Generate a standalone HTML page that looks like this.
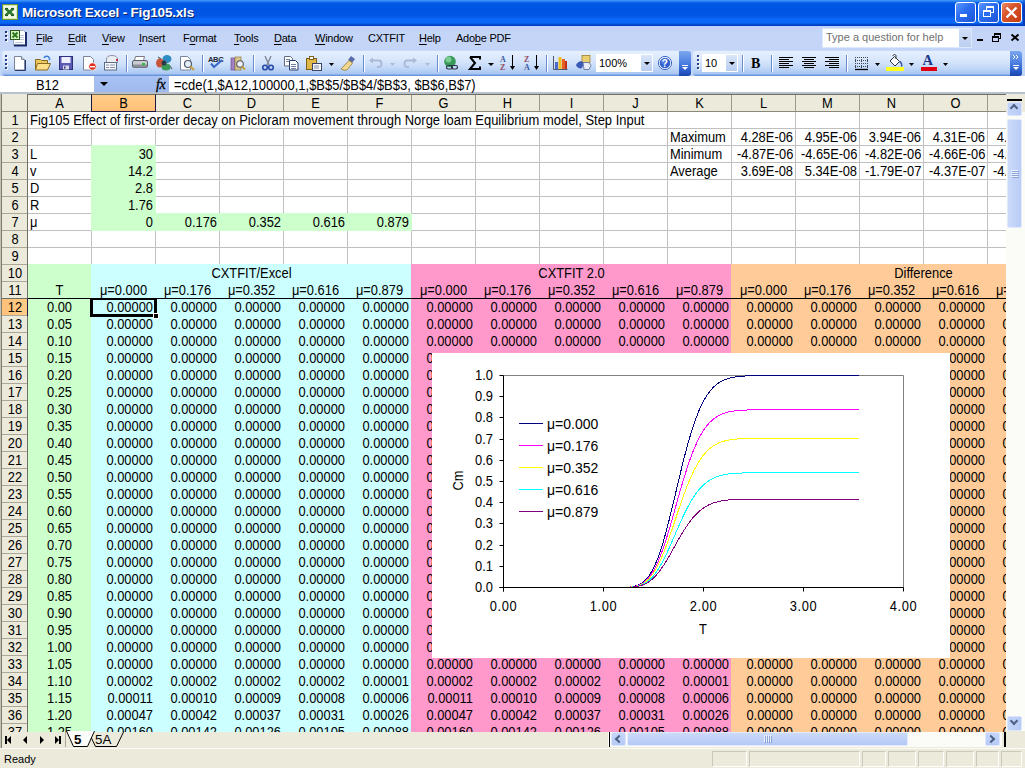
<!DOCTYPE html><html><head><meta charset="utf-8"><title>Microsoft Excel - Fig105.xls</title><style>
*{margin:0;padding:0;box-sizing:border-box}
html,body{width:1025px;height:768px;overflow:hidden;background:#fff;font-family:"Liberation Sans",sans-serif;}
.a{position:absolute}
.t{position:absolute;white-space:nowrap;font-size:13.33px;line-height:17px;height:17px;color:#000;letter-spacing:-0.3px}
.r{text-align:right}
.c{text-align:center}
.g{font-size:14px;letter-spacing:0;transform:scaleX(.92);transform-origin:0 50%}
.g.r{transform-origin:100% 50%}
.g.c{transform-origin:50% 50%}
u{text-decoration:underline;text-underline-offset:1.5px;text-decoration-thickness:1px}
</style></head><body>
<div class="a" style="left:0;top:0;width:1025px;height:26px;background:linear-gradient(#3d9cff 0px,#2a7cf0 1.5px,#0058e6 3px,#0054e3 10px,#0256e6 16px,#0a68f8 19px,#0866f6 23px,#0048d0 24.5px,#003cb8 26px)"></div>
<svg class="a" style="left:0;top:0" width="22" height="24"><rect x="2.5" y="4.5" width="15" height="15" fill="#f4f9e6" stroke="#6a9a38"/><rect x="3.5" y="5.5" width="13" height="13" fill="none" stroke="#d8e8b0" stroke-width="0.8"/><path d="M5.5 8.5l8 7M13.5 8.5l-8 7" stroke="#2f7a30" stroke-width="2.6"/><path d="M5 8.5h3M11 8.5h3M5 15.5h3M11 15.5h3" stroke="#1f5a20" stroke-width="1.2"/></svg>
<div class="a" style="left:22px;top:4px;font:bold 13.5px/18px 'Liberation Sans',sans-serif;color:#fff;text-shadow:1px 1px 0 #0a246a;letter-spacing:-0.18px">Microsoft Excel - Fig105.xls</div>
<div class="a" style="left:1023px;top:0;width:2px;height:26px;background:linear-gradient(#2a70e8,#0a3cc0 20%,#0838b0)"></div>
<div class="a" style="left:955px;top:2px;width:21px;height:21px;border:1px solid #fff;border-radius:3px;background:linear-gradient(135deg,#5c96ff 0%,#2a6cf0 45%,#1d55d8 100%)"></div>
<div class="a" style="left:978px;top:2px;width:21px;height:21px;border:1px solid #fff;border-radius:3px;background:linear-gradient(135deg,#5c96ff 0%,#2a6cf0 45%,#1d55d8 100%)"></div>
<div class="a" style="left:1001px;top:2px;width:21px;height:21px;border:1px solid #fff;border-radius:3px;background:linear-gradient(135deg,#e78a6a 0%,#d9532b 40%,#c43b12 100%)"></div>
<div class="a" style="left:960px;top:14px;width:7px;height:3px;background:#fff"></div>
<div class="a" style="left:986px;top:6px;width:8px;height:7px;border:1px solid #fff;border-top-width:2px"></div>
<div class="a" style="left:983px;top:10px;width:8px;height:7px;border:1px solid #fff;border-top-width:2px;background:#2a6cf0"></div>
<svg class="a" style="left:1000px;top:0" width="25" height="26"><path d="M6.5 7.5l10 10M16.5 7.5l-10 10" stroke="#fff" stroke-width="2.4"/></svg>
<div class="a" style="left:0;top:26px;width:1025px;height:24px;background:linear-gradient(#b6d8fc 0px,#c9cdfc 2.5px,#c6d3f8 4px,#bcd8f4 5.5px,#c4d5f8 7px,#c4d5f8 100%)"></div>
<div class="a" style="left:0;top:50px;width:1025px;height:26px;background:linear-gradient(#c9dbf9,#c0d4f6)"></div>
<div class="a" style="left:5px;top:31px;width:2px;height:2px;background:#1c3478;box-shadow:1px 1px 0 #fff"></div>
<div class="a" style="left:5px;top:35px;width:2px;height:2px;background:#1c3478;box-shadow:1px 1px 0 #fff"></div>
<div class="a" style="left:5px;top:39px;width:2px;height:2px;background:#1c3478;box-shadow:1px 1px 0 #fff"></div>
<svg class="a" style="left:0;top:26px" width="32" height="24"><path d="M13.5 4.5h10l2 2v12.5h-12z" fill="#fff" stroke="#9aa8c8"/><path d="M14 19.5h12V6" stroke="#1c2c68" stroke-width="2" fill="none"/><path d="M20 9.5h4M20 11.5h4M20 13.5h4M15 16.5h8" stroke="#b8c4dc"/><rect x="10.5" y="4.5" width="9" height="9" fill="#d8f4b8" stroke="#2a5a28"/><path d="M12.5 6.5l5 5M17.5 6.5l-5 5" stroke="#2a7a2a" stroke-width="2"/></svg>
<div class="a" style="left:36px;top:30px;font:11px/16px 'Liberation Sans',sans-serif;color:#000;letter-spacing:-0.25px"><u>F</u>ile</div>
<div class="a" style="left:68px;top:30px;font:11px/16px 'Liberation Sans',sans-serif;color:#000;letter-spacing:-0.25px"><u>E</u>dit</div>
<div class="a" style="left:102px;top:30px;font:11px/16px 'Liberation Sans',sans-serif;color:#000;letter-spacing:-0.25px"><u>V</u>iew</div>
<div class="a" style="left:139px;top:30px;font:11px/16px 'Liberation Sans',sans-serif;color:#000;letter-spacing:-0.25px"><u>I</u>nsert</div>
<div class="a" style="left:183px;top:30px;font:11px/16px 'Liberation Sans',sans-serif;color:#000;letter-spacing:-0.25px">F<u>o</u>rmat</div>
<div class="a" style="left:234px;top:30px;font:11px/16px 'Liberation Sans',sans-serif;color:#000;letter-spacing:-0.25px"><u>T</u>ools</div>
<div class="a" style="left:274px;top:30px;font:11px/16px 'Liberation Sans',sans-serif;color:#000;letter-spacing:-0.25px"><u>D</u>ata</div>
<div class="a" style="left:315px;top:30px;font:11px/16px 'Liberation Sans',sans-serif;color:#000;letter-spacing:-0.25px"><u>W</u>indow</div>
<div class="a" style="left:368px;top:30px;font:11px/16px 'Liberation Sans',sans-serif;color:#000;letter-spacing:-0.25px">CXTFIT</div>
<div class="a" style="left:419px;top:30px;font:11px/16px 'Liberation Sans',sans-serif;color:#000;letter-spacing:-0.25px"><u>H</u>elp</div>
<div class="a" style="left:456px;top:30px;font:11px/16px 'Liberation Sans',sans-serif;color:#000;letter-spacing:-0.25px">Ado<u>b</u>e PDF</div>
<div class="a" style="left:822px;top:28px;width:150px;height:20px;background:#fff;border:1px solid #dce8fb"></div>
<div class="a" style="left:826px;top:29px;font:11px/17px 'Liberation Sans',sans-serif;color:#707070;letter-spacing:0px">Type a question for help</div>
<div class="a" style="left:959px;top:29px;width:12px;height:18px;background:linear-gradient(#d0def6,#bccff0)"></div>
<div class="a" style="left:962px;top:37px;width:0;height:0;border-left:3px solid transparent;border-right:3px solid transparent;border-top:3px solid #000"></div>
<div class="a" style="left:977px;top:39px;width:6px;height:2px;background:#000"></div>
<div class="a" style="left:994px;top:33px;width:7px;height:6px;border:1px solid #000;border-top-width:2px"></div>
<div class="a" style="left:992px;top:36px;width:7px;height:6px;border:1px solid #000;border-top-width:2px;background:#c4d5f8"></div>
<svg class="a" style="left:1005px;top:28px" width="20" height="20"><path d="M6.5 6.5l7 6M13.5 6.5l-7 6" stroke="#000" stroke-width="1.9"/></svg>
<div class="a" style="left:2px;top:51px;width:688px;height:25px;border-radius:3px;background:linear-gradient(#e6f0fe 0%,#d9e7fc 35%,#c5daf8 65%,#aac7f2 90%,#7ba3e3 96%,#5a85d0 100%)"></div>
<div class="a" style="left:693px;top:51px;width:329px;height:25px;border-radius:3px;background:linear-gradient(#e6f0fe 0%,#d9e7fc 35%,#c5daf8 65%,#aac7f2 90%,#7ba3e3 96%,#5a85d0 100%)"></div>
<div class="a" style="left:679px;top:51px;width:12px;height:25px;border-radius:0 3px 3px 0;background:linear-gradient(#7ba7ee,#4a7de0 50%,#2556c4 85%,#1b46a8)"></div>
<div class="a" style="left:682px;top:65px;width:6px;height:1px;background:#fff"></div>
<div class="a" style="left:682px;top:67px;width:0;height:0;border-left:3px solid transparent;border-right:3px solid transparent;border-top:3px solid #fff"></div>
<div class="a" style="left:1010px;top:51px;width:12px;height:25px;border-radius:0 3px 3px 0;background:linear-gradient(#7ba7ee,#4a7de0 50%,#2556c4 85%,#1b46a8)"></div>
<div class="a" style="left:1013px;top:65px;width:6px;height:1px;background:#fff"></div>
<div class="a" style="left:1013px;top:67px;width:0;height:0;border-left:3px solid transparent;border-right:3px solid transparent;border-top:3px solid #fff"></div>
<svg class="a" style="left:1010px;top:51px" width="12" height="12"><path d="M3 4l2 2-2 2M6 4l2 2-2 2" stroke="#fff" stroke-width="1" fill="none"/></svg>
<div class="a" style="left:5px;top:55px;width:2px;height:2px;background:#27418f;box-shadow:1px 1px 0 #fff"></div>
<div class="a" style="left:5px;top:59px;width:2px;height:2px;background:#27418f;box-shadow:1px 1px 0 #fff"></div>
<div class="a" style="left:5px;top:63px;width:2px;height:2px;background:#27418f;box-shadow:1px 1px 0 #fff"></div>
<div class="a" style="left:5px;top:67px;width:2px;height:2px;background:#27418f;box-shadow:1px 1px 0 #fff"></div>
<div class="a" style="left:697px;top:55px;width:2px;height:2px;background:#27418f;box-shadow:1px 1px 0 #fff"></div>
<div class="a" style="left:697px;top:59px;width:2px;height:2px;background:#27418f;box-shadow:1px 1px 0 #fff"></div>
<div class="a" style="left:697px;top:63px;width:2px;height:2px;background:#27418f;box-shadow:1px 1px 0 #fff"></div>
<div class="a" style="left:697px;top:67px;width:2px;height:2px;background:#27418f;box-shadow:1px 1px 0 #fff"></div>
<div class="a" style="left:126px;top:55px;width:1px;height:17px;background:#6a8ccb;box-shadow:1px 0 0 #fff"></div>
<div class="a" style="left:202px;top:55px;width:1px;height:17px;background:#6a8ccb;box-shadow:1px 0 0 #fff"></div>
<div class="a" style="left:253px;top:55px;width:1px;height:17px;background:#6a8ccb;box-shadow:1px 0 0 #fff"></div>
<div class="a" style="left:363px;top:55px;width:1px;height:17px;background:#6a8ccb;box-shadow:1px 0 0 #fff"></div>
<div class="a" style="left:437px;top:55px;width:1px;height:17px;background:#6a8ccb;box-shadow:1px 0 0 #fff"></div>
<div class="a" style="left:546px;top:55px;width:1px;height:17px;background:#6a8ccb;box-shadow:1px 0 0 #fff"></div>
<div class="a" style="left:742px;top:55px;width:1px;height:17px;background:#6a8ccb;box-shadow:1px 0 0 #fff"></div>
<div class="a" style="left:771px;top:55px;width:1px;height:17px;background:#6a8ccb;box-shadow:1px 0 0 #fff"></div>
<div class="a" style="left:846px;top:55px;width:1px;height:17px;background:#6a8ccb;box-shadow:1px 0 0 #fff"></div>
<svg class="a" style="left:0;top:0" width="1025" height="80"><path d="M14.5 56.5h7l3 3v10.5h-10z" fill="#fff" stroke="#7a8599"/><path d="M15 70.5h10.5V60" stroke="#2a3a70" fill="none"/><path d="M21.5 56.5v3h3" fill="#dde" stroke="#7a8599"/><path d="M35.5 59.5h5l1 1h6v9h-12z" fill="#e9c860" stroke="#8a6a20"/><path d="M37.5 63.5h13l-3 6.5h-12z" fill="#ffe08a" stroke="#8a6a20"/><path d="M44 58c1-2 4-2.5 5.5 0" stroke="#3c7bd8" stroke-width="1.6" fill="none"/><path d="M48 58.5h3l-1.5 2z" fill="#3c7bd8"/><rect x="59.5" y="56.5" width="13" height="13" fill="#5a5ab4" stroke="#30307a"/><rect x="61.5" y="57" width="9" height="6" fill="#eef0ff"/><rect x="63" y="65.5" width="6" height="4" fill="#d8d8e8"/><rect x="64" y="66.5" width="1.5" height="2" fill="#30307a"/><path d="M83.5 56.5h7l3 3v10.5h-10z" fill="#fff" stroke="#7a8599"/><circle cx="92.5" cy="66.5" r="3.8" fill="#e0301c" stroke="#fff" stroke-width="0.8"/><rect x="90" y="66" width="5" height="1.4" fill="#fff"/><path d="M106.5 63v-4c0-2 2-3.5 5.5-3.5s5.5 1.5 5.5 3.5v4" fill="#eceef2" stroke="#8a94a8"/><rect x="104.5" y="62.5" width="12" height="7.5" fill="#f8f8fa" stroke="#5a6a8a"/><path d="M106 65h3M110 65h5M106 67.5h3M110 67.5h5" stroke="#8090b0"/><rect x="116" y="59" width="2" height="2" fill="#c03040"/><path d="M135.5 56.5h9l-1 4h-9z" fill="#fff" stroke="#7a7a80"/><rect x="132.5" y="60.5" width="15" height="7" rx="1.5" fill="#c8ccd0" stroke="#5a6068"/><rect x="133" y="64.5" width="14" height="3" fill="#8a9098"/><rect x="142" y="63" width="3" height="2" fill="#30c040"/><ellipse cx="167" cy="59" rx="4.5" ry="4" fill="#2f8cc0"/><ellipse cx="160" cy="63" rx="4" ry="4.5" fill="#c8563a"/><ellipse cx="166" cy="67" rx="4.5" ry="3.5" fill="#3a9a58"/><circle cx="164" cy="63" r="2.5" fill="#2a3a48"/><path d="M158 57l3 2M170 66l2 3" stroke="#5a6a78" stroke-width="1.2"/><path d="M180.5 56.5h7l3 3v10.5h-10z" fill="#fff" stroke="#7a8599"/><circle cx="188" cy="64" r="3.5" fill="#e6eef8" stroke="#505a68" stroke-width="1.2"/><path d="M190.5 66.5l3.5 3.5" stroke="#c8a040" stroke-width="2"/><text x="208" y="61.5" font-family="Liberation Sans" font-weight="bold" font-size="7.5" fill="#202838" letter-spacing="-0.3">ABC</text><path d="M211 63.5l3 3.5 8-7" stroke="#3a6ac8" stroke-width="2.2" fill="none"/><rect x="231" y="58" width="4" height="12" fill="#a080c8" stroke="#705090" stroke-width="0.7"/><rect x="235" y="57" width="6" height="13" fill="#d8c890" stroke="#907a40" stroke-width="0.7"/><circle cx="240" cy="64" r="3.3" fill="#eef" stroke="#555" stroke-width="1.1"/><path d="M242 66.5l3 3" stroke="#c0a030" stroke-width="2"/><path d="M265 56l4 9M271 56l-4 9" stroke="#7b8290" stroke-width="1.3"/><circle cx="265" cy="67.5" r="2.3" fill="none" stroke="#2a4ca8" stroke-width="1.6"/><circle cx="271" cy="67.5" r="2.3" fill="none" stroke="#2a4ca8" stroke-width="1.6"/><path d="M284.5 56.5h6l2 2v7.5h-8z" fill="#fff" stroke="#606a80"/><path d="M289.5 60.5h6l2.5 2.5v7h-8.5z" fill="#fff" stroke="#2a3a70"/><path d="M286 59.5h4M286 61.5h3M291 64.5h5M291 66.5h5M291 68.5h5" stroke="#7080a0"/><rect x="306.5" y="58.5" width="10" height="11" fill="#e0b848" stroke="#806018"/><rect x="309.5" y="56.5" width="4" height="3" fill="#fff" stroke="#806018"/><rect x="312.5" y="63.5" width="9" height="7" fill="#f6f6f8" stroke="#3a4468"/><path d="M314 66h5M314 68h5" stroke="#8090b0"/><path d="M329 63h5l-2.5 3z" fill="#000"/><path d="M351 56l4 3-3 4-4-3z" fill="#5a6aa8"/><path d="M349 60.5l3.5 2.5-5 6.5c-1.5 1-4 1-6.5-.5z" fill="#f0d890" stroke="#9a7a30" stroke-width="0.8"/><path d="M372 60.5h7c3 0 3.5 6.5 0 6.5h-2" stroke="#aabad6" stroke-width="2" fill="none"/><path d="M369 60.5l4-3v6z" fill="#aabad6"/><path d="M390 63h5l-2.5 3z" fill="#aabad6"/><path d="M414 60.5h-7c-3 0-3.5 6.5 0 6.5h2" stroke="#aabad6" stroke-width="2" fill="none"/><path d="M417 60.5l-4-3v6z" fill="#aabad6"/><path d="M425 63h5l-2.5 3z" fill="#aabad6"/><circle cx="450" cy="61.5" r="5.8" fill="#3a9a5a"/><circle cx="448.5" cy="59.5" r="3" fill="#8ad8a0" opacity="0.8"/><rect x="446.5" y="65.5" width="6" height="3.5" rx="1.7" fill="none" stroke="#2a3448" stroke-width="1.2"/><rect x="451.5" y="65.5" width="6" height="3.5" rx="1.7" fill="none" stroke="#2a3448" stroke-width="1.2"/><path d="M470 57h10v2.5M470 57l5 6-5 6h10v-2.5" stroke="#000" stroke-width="2" fill="none"/><path d="M488 63h6l-3 3z" fill="#000"/><text x="500" y="62" font-family="Liberation Serif" font-weight="bold" font-size="8" fill="#3a5aa0">A</text><text x="500" y="70" font-family="Liberation Serif" font-weight="bold" font-size="8" fill="#904a60">Z</text><path d="M512.5 55v13" stroke="#000"/><path d="M510 66h5l-2.5 4z" fill="#000"/><text x="524" y="62" font-family="Liberation Serif" font-weight="bold" font-size="8" fill="#904a60">Z</text><text x="524" y="70" font-family="Liberation Serif" font-weight="bold" font-size="8" fill="#3a5aa0">A</text><path d="M536.5 55v13" stroke="#000"/><path d="M534 66h5l-2.5 4z" fill="#000"/><path d="M553.5 56v13.5h14" stroke="#505a70" fill="none"/><rect x="555" y="62" width="3" height="7" fill="#4a6ad0"/><rect x="558.5" y="57" width="3" height="12" fill="#f0c020"/><rect x="562" y="59" width="3" height="10" fill="#e86020"/><rect x="565" y="61" width="2" height="8" fill="#c03020"/><rect x="582" y="55.5" width="8" height="7" fill="#e8d070" stroke="#a08030" stroke-width="0.8"/><path d="M576 65c2-4 6-5 8-2l-2 5c-2 1-5 0-6-3z" fill="#3a5ab8"/><path d="M583 62.5h6l2 3-2 4h-5z" fill="#e8eef8" stroke="#5a6a98" stroke-width="0.8"/><circle cx="665" cy="63" r="6.6" fill="#fff" stroke="#3a64c8" stroke-width="1"/><circle cx="665" cy="63" r="5.3" fill="#2f5fd0"/><circle cx="664" cy="61.5" r="3" fill="#5a88e8" opacity="0.7"/><text x="661.8" y="67" font-family="Liberation Sans" font-weight="bold" font-size="10" fill="#fff">?</text><text x="751" y="67.5" font-family="Liberation Serif" font-weight="bold" font-size="14" fill="#000">B</text><path d="M779 57.5h14M779 59.5h10M779 61.5h14M779 63.5h10M779 65.5h14M779 67.5h10" stroke="#000" stroke-width="1.15"/><path d="M802 57.5h14M804 59.5h10M802 61.5h14M804 63.5h10M802 65.5h14M804 67.5h10" stroke="#000" stroke-width="1.15"/><path d="M825 57.5h14M829 59.5h10M825 61.5h14M829 63.5h10M825 65.5h14M829 67.5h10" stroke="#000" stroke-width="1.15"/><path d="M855 57.5h1M857 57.5h1M859 57.5h1M861 57.5h1M863 57.5h1M865 57.5h1M867 57.5h1M855 60.5h1M857 60.5h1M859 60.5h1M861 60.5h1M863 60.5h1M865 60.5h1M867 60.5h1M855 63.5h1M857 63.5h1M859 63.5h1M861 63.5h1M863 63.5h1M865 63.5h1M867 63.5h1M855 66.5h1M857 66.5h1M859 66.5h1M861 66.5h1M863 66.5h1M865 66.5h1M867 66.5h1M855.5 57v1M855.5 59v1M855.5 61v1M855.5 63v1M855.5 65v1M855.5 67v1M861.5 57v1M861.5 59v1M861.5 61v1M861.5 63v1M861.5 65v1M861.5 67v1M867.5 57v1M867.5 59v1M867.5 61v1M867.5 63v1M867.5 65v1M867.5 67v1" stroke="#404858" stroke-width="1"/><path d="M855 69.5h13" stroke="#000" stroke-width="1.3"/><path d="M875 63h5l-2.5 3z" fill="#000"/><path d="M890 61l4.5-4.5 5 5-4.5 4.5z" fill="#fff" stroke="#303840"/><path d="M893 56c0-2 3-2 3 0v3" stroke="#303840" fill="none"/><path d="M899.5 61.5c2 1 2.5 3.5 2 5" stroke="#3050a0" stroke-width="1.5" fill="none"/><rect x="886" y="67" width="18" height="4" rx="1" fill="#ffff20"/><path d="M909 63h5l-2.5 3z" fill="#000"/><text x="922.5" y="65" font-family="Liberation Serif" font-weight="bold" font-size="14.5" fill="#203a88">A</text><rect x="921" y="67" width="16" height="4" fill="#e00010"/><path d="M943 63h5l-2.5 3z" fill="#000"/></svg>
<div class="a" style="left:596px;top:54px;width:57px;height:18px;background:#fff"></div>
<div class="a" style="left:599px;top:55px;font:11px/16px 'Liberation Sans',sans-serif;color:#000">100%</div>
<div class="a" style="left:641px;top:55px;width:11px;height:16px;background:linear-gradient(#dae6f8,#b8cdef)"></div>
<div class="a" style="left:644px;top:62px;border-left:3px solid transparent;border-right:3px solid transparent;border-top:3px solid #000"></div>
<div class="a" style="left:702px;top:54px;width:36px;height:18px;background:#fff"></div>
<div class="a" style="left:705px;top:55px;font:11px/16px 'Liberation Sans',sans-serif;color:#000">10</div>
<div class="a" style="left:726px;top:55px;width:11px;height:16px;background:linear-gradient(#dae6f8,#b8cdef)"></div>
<div class="a" style="left:729px;top:62px;border-left:3px solid transparent;border-right:3px solid transparent;border-top:3px solid #000"></div>
<div class="a" style="left:0;top:76px;width:1025px;height:17px;background:#fff"></div>
<div class="a" style="left:94px;top:76px;width:75px;height:17px;background:linear-gradient(#a9c2f3,#9fb9ee)"></div>
<div class="a" style="left:0;top:92px;width:1025px;height:2px;background:#b8c0cc"></div>
<div class="t g" style="left:36px;top:77px;line-height:16px">B12</div>
<div class="a" style="left:100px;top:82px;border-left:4px solid transparent;border-right:4px solid transparent;border-top:4px solid #000"></div>
<div class="a" style="left:156px;top:76px;font:italic 14px/17px 'Liberation Serif',serif;color:#000;letter-spacing:-0.5px;-webkit-text-stroke:0.3px #000">fx</div>
<div class="t g" style="left:174px;top:77px;line-height:16px;transform:scaleX(.926)">=cde(1,$A12,100000,1,$B$5/$B$4/$B$3, $B$6,B$7)</div>
<div class="a" style="left:0;top:94px;width:1006px;height:18px;background:#ebeadb;border-top:1px solid #716f64;border-bottom:1px solid #8a887a"></div>
<div class="a" style="left:0;top:94px;width:28px;height:638px;background:#ebeadb"></div>
<div class="a" style="left:28px;top:112px;width:978px;height:620px;background:#fff;overflow:hidden">
<div class="a" style="left:63px;top:0;width:1px;height:620px;background:#c0c0c0"></div>
<div class="a" style="left:127px;top:0;width:1px;height:620px;background:#c0c0c0"></div>
<div class="a" style="left:191px;top:0;width:1px;height:620px;background:#c0c0c0"></div>
<div class="a" style="left:255px;top:0;width:1px;height:620px;background:#c0c0c0"></div>
<div class="a" style="left:319px;top:0;width:1px;height:620px;background:#c0c0c0"></div>
<div class="a" style="left:383px;top:0;width:1px;height:620px;background:#c0c0c0"></div>
<div class="a" style="left:447px;top:0;width:1px;height:620px;background:#c0c0c0"></div>
<div class="a" style="left:511px;top:0;width:1px;height:620px;background:#c0c0c0"></div>
<div class="a" style="left:575px;top:0;width:1px;height:620px;background:#c0c0c0"></div>
<div class="a" style="left:639px;top:0;width:1px;height:620px;background:#c0c0c0"></div>
<div class="a" style="left:703px;top:0;width:1px;height:620px;background:#c0c0c0"></div>
<div class="a" style="left:767px;top:0;width:1px;height:620px;background:#c0c0c0"></div>
<div class="a" style="left:831px;top:0;width:1px;height:620px;background:#c0c0c0"></div>
<div class="a" style="left:895px;top:0;width:1px;height:620px;background:#c0c0c0"></div>
<div class="a" style="left:959px;top:0;width:1px;height:620px;background:#c0c0c0"></div>
<div class="a" style="left:1023px;top:0;width:1px;height:620px;background:#c0c0c0"></div>
<div class="a" style="left:0;top:16px;width:978px;height:1px;background:#c0c0c0"></div>
<div class="a" style="left:0;top:33px;width:978px;height:1px;background:#c0c0c0"></div>
<div class="a" style="left:0;top:50px;width:978px;height:1px;background:#c0c0c0"></div>
<div class="a" style="left:0;top:67px;width:978px;height:1px;background:#c0c0c0"></div>
<div class="a" style="left:0;top:84px;width:978px;height:1px;background:#c0c0c0"></div>
<div class="a" style="left:0;top:101px;width:978px;height:1px;background:#c0c0c0"></div>
<div class="a" style="left:0;top:118px;width:978px;height:1px;background:#c0c0c0"></div>
<div class="a" style="left:0;top:135px;width:978px;height:1px;background:#c0c0c0"></div>
<div class="a" style="left:0;top:152px;width:978px;height:1px;background:#c0c0c0"></div>
<div class="a" style="left:0;top:169px;width:978px;height:1px;background:#c0c0c0"></div>
<div class="a" style="left:0;top:186px;width:978px;height:1px;background:#c0c0c0"></div>
<div class="a" style="left:0;top:203px;width:978px;height:1px;background:#c0c0c0"></div>
<div class="a" style="left:0;top:220px;width:978px;height:1px;background:#c0c0c0"></div>
<div class="a" style="left:0;top:237px;width:978px;height:1px;background:#c0c0c0"></div>
<div class="a" style="left:0;top:254px;width:978px;height:1px;background:#c0c0c0"></div>
<div class="a" style="left:0;top:271px;width:978px;height:1px;background:#c0c0c0"></div>
<div class="a" style="left:0;top:288px;width:978px;height:1px;background:#c0c0c0"></div>
<div class="a" style="left:0;top:305px;width:978px;height:1px;background:#c0c0c0"></div>
<div class="a" style="left:0;top:322px;width:978px;height:1px;background:#c0c0c0"></div>
<div class="a" style="left:0;top:339px;width:978px;height:1px;background:#c0c0c0"></div>
<div class="a" style="left:0;top:356px;width:978px;height:1px;background:#c0c0c0"></div>
<div class="a" style="left:0;top:373px;width:978px;height:1px;background:#c0c0c0"></div>
<div class="a" style="left:0;top:390px;width:978px;height:1px;background:#c0c0c0"></div>
<div class="a" style="left:0;top:407px;width:978px;height:1px;background:#c0c0c0"></div>
<div class="a" style="left:0;top:424px;width:978px;height:1px;background:#c0c0c0"></div>
<div class="a" style="left:0;top:441px;width:978px;height:1px;background:#c0c0c0"></div>
<div class="a" style="left:0;top:458px;width:978px;height:1px;background:#c0c0c0"></div>
<div class="a" style="left:0;top:475px;width:978px;height:1px;background:#c0c0c0"></div>
<div class="a" style="left:0;top:492px;width:978px;height:1px;background:#c0c0c0"></div>
<div class="a" style="left:0;top:509px;width:978px;height:1px;background:#c0c0c0"></div>
<div class="a" style="left:0;top:526px;width:978px;height:1px;background:#c0c0c0"></div>
<div class="a" style="left:0;top:543px;width:978px;height:1px;background:#c0c0c0"></div>
<div class="a" style="left:0;top:560px;width:978px;height:1px;background:#c0c0c0"></div>
<div class="a" style="left:0;top:577px;width:978px;height:1px;background:#c0c0c0"></div>
<div class="a" style="left:0;top:594px;width:978px;height:1px;background:#c0c0c0"></div>
<div class="a" style="left:0;top:611px;width:978px;height:1px;background:#c0c0c0"></div>
<div class="a" style="left:0;top:628px;width:978px;height:1px;background:#c0c0c0"></div>
<div class="a" style="left:63px;top:33px;width:65px;height:86px;background:#ccffcc"></div>
<div class="a" style="left:127px;top:101px;width:257px;height:18px;background:#ccffcc"></div>
<div class="a" style="left:0px;top:152px;width:64px;height:477px;background:#ccffcc"></div>
<div class="a" style="left:63px;top:152px;width:321px;height:477px;background:#ccffff"></div>
<div class="a" style="left:383px;top:152px;width:321px;height:477px;background:#ff99cc"></div>
<div class="a" style="left:703px;top:152px;width:321px;height:477px;background:#ffcc99"></div>
<div class="a" style="left:0;top:186px;width:978px;height:1px;background:#000"></div>
<div class="a" style="left:0;top:0;width:639px;height:16px;background:#fff"></div>
<div class="t g" style="left:2px;top:0px;transform:scaleX(.925)">Fig105 Effect of first-order decay on Picloram movement through Norge loam Equilibrium model, Step Input</div>
<div class="t g" style="left:2px;top:34px">L</div>
<div class="t g r" style="left:64px;top:34px;width:61px">30</div>
<div class="t g" style="left:2px;top:51px">v</div>
<div class="t g r" style="left:64px;top:51px;width:61px">14.2</div>
<div class="t g" style="left:2px;top:68px">D</div>
<div class="t g r" style="left:64px;top:68px;width:61px">2.8</div>
<div class="t g" style="left:2px;top:85px">R</div>
<div class="t g r" style="left:64px;top:85px;width:61px">1.76</div>
<div class="t g" style="left:2px;top:102px">&mu;</div>
<div class="t g r" style="left:64px;top:102px;width:61px">0</div>
<div class="t g r" style="left:128px;top:102px;width:61px">0.176</div>
<div class="t g r" style="left:192px;top:102px;width:61px">0.352</div>
<div class="t g r" style="left:256px;top:102px;width:61px">0.616</div>
<div class="t g r" style="left:320px;top:102px;width:61px">0.879</div>
<div class="t g" style="left:642px;top:17px">Maximum</div>
<div class="t g r" style="left:704px;top:17px;width:61px">4.28E-06</div>
<div class="t g r" style="left:768px;top:17px;width:61px">4.95E-06</div>
<div class="t g r" style="left:832px;top:17px;width:61px">3.94E-06</div>
<div class="t g r" style="left:896px;top:17px;width:61px">4.31E-06</div>
<div class="t g r" style="left:960px;top:17px;width:61px">4.12E-06</div>
<div class="t g" style="left:642px;top:34px">Minimum</div>
<div class="t g r" style="left:704px;top:34px;width:61px">-4.87E-06</div>
<div class="t g r" style="left:768px;top:34px;width:61px">-4.65E-06</div>
<div class="t g r" style="left:832px;top:34px;width:61px">-4.82E-06</div>
<div class="t g r" style="left:896px;top:34px;width:61px">-4.66E-06</div>
<div class="t g r" style="left:960px;top:34px;width:61px">-4.41E-06</div>
<div class="t g" style="left:642px;top:51px">Average</div>
<div class="t g r" style="left:704px;top:51px;width:61px">3.69E-08</div>
<div class="t g r" style="left:768px;top:51px;width:61px">5.34E-08</div>
<div class="t g r" style="left:832px;top:51px;width:61px">-1.79E-07</div>
<div class="t g r" style="left:896px;top:51px;width:61px">-4.37E-07</div>
<div class="t g r" style="left:960px;top:51px;width:61px">-4.52E-07</div>
<div class="t g c" style="left:64px;top:153px;width:319px">CXTFIT/Excel</div>
<div class="t g c" style="left:384px;top:153px;width:319px">CXTFIT 2.0</div>
<div class="t g c" style="left:704px;top:153px;width:383px">Difference</div>
<div class="t g c" style="left:0px;top:170px;width:63px">T</div>
<div class="t g c" style="left:64px;top:170px;width:63px">&mu;=0.000</div>
<div class="t g c" style="left:128px;top:170px;width:63px">&mu;=0.176</div>
<div class="t g c" style="left:192px;top:170px;width:63px">&mu;=0.352</div>
<div class="t g c" style="left:256px;top:170px;width:63px">&mu;=0.616</div>
<div class="t g c" style="left:320px;top:170px;width:63px">&mu;=0.879</div>
<div class="t g c" style="left:384px;top:170px;width:63px">&mu;=0.000</div>
<div class="t g c" style="left:448px;top:170px;width:63px">&mu;=0.176</div>
<div class="t g c" style="left:512px;top:170px;width:63px">&mu;=0.352</div>
<div class="t g c" style="left:576px;top:170px;width:63px">&mu;=0.616</div>
<div class="t g c" style="left:640px;top:170px;width:63px">&mu;=0.879</div>
<div class="t g c" style="left:704px;top:170px;width:63px">&mu;=0.000</div>
<div class="t g c" style="left:768px;top:170px;width:63px">&mu;=0.176</div>
<div class="t g c" style="left:832px;top:170px;width:63px">&mu;=0.352</div>
<div class="t g c" style="left:896px;top:170px;width:63px">&mu;=0.616</div>
<div class="t g c" style="left:960px;top:170px;width:63px">&mu;=0.879</div>
<div class="t g c" style="left:0px;top:187px;width:63px">0.00</div>
<div class="t g r" style="left:64px;top:187px;width:61px">0.00000</div>
<div class="t g r" style="left:384px;top:187px;width:61px">0.00000</div>
<div class="t g r" style="left:704px;top:187px;width:61px">0.00000</div>
<div class="t g r" style="left:128px;top:187px;width:61px">0.00000</div>
<div class="t g r" style="left:448px;top:187px;width:61px">0.00000</div>
<div class="t g r" style="left:768px;top:187px;width:61px">0.00000</div>
<div class="t g r" style="left:192px;top:187px;width:61px">0.00000</div>
<div class="t g r" style="left:512px;top:187px;width:61px">0.00000</div>
<div class="t g r" style="left:832px;top:187px;width:61px">0.00000</div>
<div class="t g r" style="left:256px;top:187px;width:61px">0.00000</div>
<div class="t g r" style="left:576px;top:187px;width:61px">0.00000</div>
<div class="t g r" style="left:896px;top:187px;width:61px">0.00000</div>
<div class="t g r" style="left:320px;top:187px;width:61px">0.00000</div>
<div class="t g r" style="left:640px;top:187px;width:61px">0.00000</div>
<div class="t g r" style="left:960px;top:187px;width:61px">0.00000</div>
<div class="t g c" style="left:0px;top:204px;width:63px">0.05</div>
<div class="t g r" style="left:64px;top:204px;width:61px">0.00000</div>
<div class="t g r" style="left:384px;top:204px;width:61px">0.00000</div>
<div class="t g r" style="left:704px;top:204px;width:61px">0.00000</div>
<div class="t g r" style="left:128px;top:204px;width:61px">0.00000</div>
<div class="t g r" style="left:448px;top:204px;width:61px">0.00000</div>
<div class="t g r" style="left:768px;top:204px;width:61px">0.00000</div>
<div class="t g r" style="left:192px;top:204px;width:61px">0.00000</div>
<div class="t g r" style="left:512px;top:204px;width:61px">0.00000</div>
<div class="t g r" style="left:832px;top:204px;width:61px">0.00000</div>
<div class="t g r" style="left:256px;top:204px;width:61px">0.00000</div>
<div class="t g r" style="left:576px;top:204px;width:61px">0.00000</div>
<div class="t g r" style="left:896px;top:204px;width:61px">0.00000</div>
<div class="t g r" style="left:320px;top:204px;width:61px">0.00000</div>
<div class="t g r" style="left:640px;top:204px;width:61px">0.00000</div>
<div class="t g r" style="left:960px;top:204px;width:61px">0.00000</div>
<div class="t g c" style="left:0px;top:221px;width:63px">0.10</div>
<div class="t g r" style="left:64px;top:221px;width:61px">0.00000</div>
<div class="t g r" style="left:384px;top:221px;width:61px">0.00000</div>
<div class="t g r" style="left:704px;top:221px;width:61px">0.00000</div>
<div class="t g r" style="left:128px;top:221px;width:61px">0.00000</div>
<div class="t g r" style="left:448px;top:221px;width:61px">0.00000</div>
<div class="t g r" style="left:768px;top:221px;width:61px">0.00000</div>
<div class="t g r" style="left:192px;top:221px;width:61px">0.00000</div>
<div class="t g r" style="left:512px;top:221px;width:61px">0.00000</div>
<div class="t g r" style="left:832px;top:221px;width:61px">0.00000</div>
<div class="t g r" style="left:256px;top:221px;width:61px">0.00000</div>
<div class="t g r" style="left:576px;top:221px;width:61px">0.00000</div>
<div class="t g r" style="left:896px;top:221px;width:61px">0.00000</div>
<div class="t g r" style="left:320px;top:221px;width:61px">0.00000</div>
<div class="t g r" style="left:640px;top:221px;width:61px">0.00000</div>
<div class="t g r" style="left:960px;top:221px;width:61px">0.00000</div>
<div class="t g c" style="left:0px;top:238px;width:63px">0.15</div>
<div class="t g r" style="left:64px;top:238px;width:61px">0.00000</div>
<div class="t g r" style="left:384px;top:238px;width:61px">0.00000</div>
<div class="t g r" style="left:704px;top:238px;width:61px">0.00000</div>
<div class="t g r" style="left:128px;top:238px;width:61px">0.00000</div>
<div class="t g r" style="left:448px;top:238px;width:61px">0.00000</div>
<div class="t g r" style="left:768px;top:238px;width:61px">0.00000</div>
<div class="t g r" style="left:192px;top:238px;width:61px">0.00000</div>
<div class="t g r" style="left:512px;top:238px;width:61px">0.00000</div>
<div class="t g r" style="left:832px;top:238px;width:61px">0.00000</div>
<div class="t g r" style="left:256px;top:238px;width:61px">0.00000</div>
<div class="t g r" style="left:576px;top:238px;width:61px">0.00000</div>
<div class="t g r" style="left:896px;top:238px;width:61px">0.00000</div>
<div class="t g r" style="left:320px;top:238px;width:61px">0.00000</div>
<div class="t g r" style="left:640px;top:238px;width:61px">0.00000</div>
<div class="t g r" style="left:960px;top:238px;width:61px">0.00000</div>
<div class="t g c" style="left:0px;top:255px;width:63px">0.20</div>
<div class="t g r" style="left:64px;top:255px;width:61px">0.00000</div>
<div class="t g r" style="left:384px;top:255px;width:61px">0.00000</div>
<div class="t g r" style="left:704px;top:255px;width:61px">0.00000</div>
<div class="t g r" style="left:128px;top:255px;width:61px">0.00000</div>
<div class="t g r" style="left:448px;top:255px;width:61px">0.00000</div>
<div class="t g r" style="left:768px;top:255px;width:61px">0.00000</div>
<div class="t g r" style="left:192px;top:255px;width:61px">0.00000</div>
<div class="t g r" style="left:512px;top:255px;width:61px">0.00000</div>
<div class="t g r" style="left:832px;top:255px;width:61px">0.00000</div>
<div class="t g r" style="left:256px;top:255px;width:61px">0.00000</div>
<div class="t g r" style="left:576px;top:255px;width:61px">0.00000</div>
<div class="t g r" style="left:896px;top:255px;width:61px">0.00000</div>
<div class="t g r" style="left:320px;top:255px;width:61px">0.00000</div>
<div class="t g r" style="left:640px;top:255px;width:61px">0.00000</div>
<div class="t g r" style="left:960px;top:255px;width:61px">0.00000</div>
<div class="t g c" style="left:0px;top:272px;width:63px">0.25</div>
<div class="t g r" style="left:64px;top:272px;width:61px">0.00000</div>
<div class="t g r" style="left:384px;top:272px;width:61px">0.00000</div>
<div class="t g r" style="left:704px;top:272px;width:61px">0.00000</div>
<div class="t g r" style="left:128px;top:272px;width:61px">0.00000</div>
<div class="t g r" style="left:448px;top:272px;width:61px">0.00000</div>
<div class="t g r" style="left:768px;top:272px;width:61px">0.00000</div>
<div class="t g r" style="left:192px;top:272px;width:61px">0.00000</div>
<div class="t g r" style="left:512px;top:272px;width:61px">0.00000</div>
<div class="t g r" style="left:832px;top:272px;width:61px">0.00000</div>
<div class="t g r" style="left:256px;top:272px;width:61px">0.00000</div>
<div class="t g r" style="left:576px;top:272px;width:61px">0.00000</div>
<div class="t g r" style="left:896px;top:272px;width:61px">0.00000</div>
<div class="t g r" style="left:320px;top:272px;width:61px">0.00000</div>
<div class="t g r" style="left:640px;top:272px;width:61px">0.00000</div>
<div class="t g r" style="left:960px;top:272px;width:61px">0.00000</div>
<div class="t g c" style="left:0px;top:289px;width:63px">0.30</div>
<div class="t g r" style="left:64px;top:289px;width:61px">0.00000</div>
<div class="t g r" style="left:384px;top:289px;width:61px">0.00000</div>
<div class="t g r" style="left:704px;top:289px;width:61px">0.00000</div>
<div class="t g r" style="left:128px;top:289px;width:61px">0.00000</div>
<div class="t g r" style="left:448px;top:289px;width:61px">0.00000</div>
<div class="t g r" style="left:768px;top:289px;width:61px">0.00000</div>
<div class="t g r" style="left:192px;top:289px;width:61px">0.00000</div>
<div class="t g r" style="left:512px;top:289px;width:61px">0.00000</div>
<div class="t g r" style="left:832px;top:289px;width:61px">0.00000</div>
<div class="t g r" style="left:256px;top:289px;width:61px">0.00000</div>
<div class="t g r" style="left:576px;top:289px;width:61px">0.00000</div>
<div class="t g r" style="left:896px;top:289px;width:61px">0.00000</div>
<div class="t g r" style="left:320px;top:289px;width:61px">0.00000</div>
<div class="t g r" style="left:640px;top:289px;width:61px">0.00000</div>
<div class="t g r" style="left:960px;top:289px;width:61px">0.00000</div>
<div class="t g c" style="left:0px;top:306px;width:63px">0.35</div>
<div class="t g r" style="left:64px;top:306px;width:61px">0.00000</div>
<div class="t g r" style="left:384px;top:306px;width:61px">0.00000</div>
<div class="t g r" style="left:704px;top:306px;width:61px">0.00000</div>
<div class="t g r" style="left:128px;top:306px;width:61px">0.00000</div>
<div class="t g r" style="left:448px;top:306px;width:61px">0.00000</div>
<div class="t g r" style="left:768px;top:306px;width:61px">0.00000</div>
<div class="t g r" style="left:192px;top:306px;width:61px">0.00000</div>
<div class="t g r" style="left:512px;top:306px;width:61px">0.00000</div>
<div class="t g r" style="left:832px;top:306px;width:61px">0.00000</div>
<div class="t g r" style="left:256px;top:306px;width:61px">0.00000</div>
<div class="t g r" style="left:576px;top:306px;width:61px">0.00000</div>
<div class="t g r" style="left:896px;top:306px;width:61px">0.00000</div>
<div class="t g r" style="left:320px;top:306px;width:61px">0.00000</div>
<div class="t g r" style="left:640px;top:306px;width:61px">0.00000</div>
<div class="t g r" style="left:960px;top:306px;width:61px">0.00000</div>
<div class="t g c" style="left:0px;top:323px;width:63px">0.40</div>
<div class="t g r" style="left:64px;top:323px;width:61px">0.00000</div>
<div class="t g r" style="left:384px;top:323px;width:61px">0.00000</div>
<div class="t g r" style="left:704px;top:323px;width:61px">0.00000</div>
<div class="t g r" style="left:128px;top:323px;width:61px">0.00000</div>
<div class="t g r" style="left:448px;top:323px;width:61px">0.00000</div>
<div class="t g r" style="left:768px;top:323px;width:61px">0.00000</div>
<div class="t g r" style="left:192px;top:323px;width:61px">0.00000</div>
<div class="t g r" style="left:512px;top:323px;width:61px">0.00000</div>
<div class="t g r" style="left:832px;top:323px;width:61px">0.00000</div>
<div class="t g r" style="left:256px;top:323px;width:61px">0.00000</div>
<div class="t g r" style="left:576px;top:323px;width:61px">0.00000</div>
<div class="t g r" style="left:896px;top:323px;width:61px">0.00000</div>
<div class="t g r" style="left:320px;top:323px;width:61px">0.00000</div>
<div class="t g r" style="left:640px;top:323px;width:61px">0.00000</div>
<div class="t g r" style="left:960px;top:323px;width:61px">0.00000</div>
<div class="t g c" style="left:0px;top:340px;width:63px">0.45</div>
<div class="t g r" style="left:64px;top:340px;width:61px">0.00000</div>
<div class="t g r" style="left:384px;top:340px;width:61px">0.00000</div>
<div class="t g r" style="left:704px;top:340px;width:61px">0.00000</div>
<div class="t g r" style="left:128px;top:340px;width:61px">0.00000</div>
<div class="t g r" style="left:448px;top:340px;width:61px">0.00000</div>
<div class="t g r" style="left:768px;top:340px;width:61px">0.00000</div>
<div class="t g r" style="left:192px;top:340px;width:61px">0.00000</div>
<div class="t g r" style="left:512px;top:340px;width:61px">0.00000</div>
<div class="t g r" style="left:832px;top:340px;width:61px">0.00000</div>
<div class="t g r" style="left:256px;top:340px;width:61px">0.00000</div>
<div class="t g r" style="left:576px;top:340px;width:61px">0.00000</div>
<div class="t g r" style="left:896px;top:340px;width:61px">0.00000</div>
<div class="t g r" style="left:320px;top:340px;width:61px">0.00000</div>
<div class="t g r" style="left:640px;top:340px;width:61px">0.00000</div>
<div class="t g r" style="left:960px;top:340px;width:61px">0.00000</div>
<div class="t g c" style="left:0px;top:357px;width:63px">0.50</div>
<div class="t g r" style="left:64px;top:357px;width:61px">0.00000</div>
<div class="t g r" style="left:384px;top:357px;width:61px">0.00000</div>
<div class="t g r" style="left:704px;top:357px;width:61px">0.00000</div>
<div class="t g r" style="left:128px;top:357px;width:61px">0.00000</div>
<div class="t g r" style="left:448px;top:357px;width:61px">0.00000</div>
<div class="t g r" style="left:768px;top:357px;width:61px">0.00000</div>
<div class="t g r" style="left:192px;top:357px;width:61px">0.00000</div>
<div class="t g r" style="left:512px;top:357px;width:61px">0.00000</div>
<div class="t g r" style="left:832px;top:357px;width:61px">0.00000</div>
<div class="t g r" style="left:256px;top:357px;width:61px">0.00000</div>
<div class="t g r" style="left:576px;top:357px;width:61px">0.00000</div>
<div class="t g r" style="left:896px;top:357px;width:61px">0.00000</div>
<div class="t g r" style="left:320px;top:357px;width:61px">0.00000</div>
<div class="t g r" style="left:640px;top:357px;width:61px">0.00000</div>
<div class="t g r" style="left:960px;top:357px;width:61px">0.00000</div>
<div class="t g c" style="left:0px;top:374px;width:63px">0.55</div>
<div class="t g r" style="left:64px;top:374px;width:61px">0.00000</div>
<div class="t g r" style="left:384px;top:374px;width:61px">0.00000</div>
<div class="t g r" style="left:704px;top:374px;width:61px">0.00000</div>
<div class="t g r" style="left:128px;top:374px;width:61px">0.00000</div>
<div class="t g r" style="left:448px;top:374px;width:61px">0.00000</div>
<div class="t g r" style="left:768px;top:374px;width:61px">0.00000</div>
<div class="t g r" style="left:192px;top:374px;width:61px">0.00000</div>
<div class="t g r" style="left:512px;top:374px;width:61px">0.00000</div>
<div class="t g r" style="left:832px;top:374px;width:61px">0.00000</div>
<div class="t g r" style="left:256px;top:374px;width:61px">0.00000</div>
<div class="t g r" style="left:576px;top:374px;width:61px">0.00000</div>
<div class="t g r" style="left:896px;top:374px;width:61px">0.00000</div>
<div class="t g r" style="left:320px;top:374px;width:61px">0.00000</div>
<div class="t g r" style="left:640px;top:374px;width:61px">0.00000</div>
<div class="t g r" style="left:960px;top:374px;width:61px">0.00000</div>
<div class="t g c" style="left:0px;top:391px;width:63px">0.60</div>
<div class="t g r" style="left:64px;top:391px;width:61px">0.00000</div>
<div class="t g r" style="left:384px;top:391px;width:61px">0.00000</div>
<div class="t g r" style="left:704px;top:391px;width:61px">0.00000</div>
<div class="t g r" style="left:128px;top:391px;width:61px">0.00000</div>
<div class="t g r" style="left:448px;top:391px;width:61px">0.00000</div>
<div class="t g r" style="left:768px;top:391px;width:61px">0.00000</div>
<div class="t g r" style="left:192px;top:391px;width:61px">0.00000</div>
<div class="t g r" style="left:512px;top:391px;width:61px">0.00000</div>
<div class="t g r" style="left:832px;top:391px;width:61px">0.00000</div>
<div class="t g r" style="left:256px;top:391px;width:61px">0.00000</div>
<div class="t g r" style="left:576px;top:391px;width:61px">0.00000</div>
<div class="t g r" style="left:896px;top:391px;width:61px">0.00000</div>
<div class="t g r" style="left:320px;top:391px;width:61px">0.00000</div>
<div class="t g r" style="left:640px;top:391px;width:61px">0.00000</div>
<div class="t g r" style="left:960px;top:391px;width:61px">0.00000</div>
<div class="t g c" style="left:0px;top:408px;width:63px">0.65</div>
<div class="t g r" style="left:64px;top:408px;width:61px">0.00000</div>
<div class="t g r" style="left:384px;top:408px;width:61px">0.00000</div>
<div class="t g r" style="left:704px;top:408px;width:61px">0.00000</div>
<div class="t g r" style="left:128px;top:408px;width:61px">0.00000</div>
<div class="t g r" style="left:448px;top:408px;width:61px">0.00000</div>
<div class="t g r" style="left:768px;top:408px;width:61px">0.00000</div>
<div class="t g r" style="left:192px;top:408px;width:61px">0.00000</div>
<div class="t g r" style="left:512px;top:408px;width:61px">0.00000</div>
<div class="t g r" style="left:832px;top:408px;width:61px">0.00000</div>
<div class="t g r" style="left:256px;top:408px;width:61px">0.00000</div>
<div class="t g r" style="left:576px;top:408px;width:61px">0.00000</div>
<div class="t g r" style="left:896px;top:408px;width:61px">0.00000</div>
<div class="t g r" style="left:320px;top:408px;width:61px">0.00000</div>
<div class="t g r" style="left:640px;top:408px;width:61px">0.00000</div>
<div class="t g r" style="left:960px;top:408px;width:61px">0.00000</div>
<div class="t g c" style="left:0px;top:425px;width:63px">0.70</div>
<div class="t g r" style="left:64px;top:425px;width:61px">0.00000</div>
<div class="t g r" style="left:384px;top:425px;width:61px">0.00000</div>
<div class="t g r" style="left:704px;top:425px;width:61px">0.00000</div>
<div class="t g r" style="left:128px;top:425px;width:61px">0.00000</div>
<div class="t g r" style="left:448px;top:425px;width:61px">0.00000</div>
<div class="t g r" style="left:768px;top:425px;width:61px">0.00000</div>
<div class="t g r" style="left:192px;top:425px;width:61px">0.00000</div>
<div class="t g r" style="left:512px;top:425px;width:61px">0.00000</div>
<div class="t g r" style="left:832px;top:425px;width:61px">0.00000</div>
<div class="t g r" style="left:256px;top:425px;width:61px">0.00000</div>
<div class="t g r" style="left:576px;top:425px;width:61px">0.00000</div>
<div class="t g r" style="left:896px;top:425px;width:61px">0.00000</div>
<div class="t g r" style="left:320px;top:425px;width:61px">0.00000</div>
<div class="t g r" style="left:640px;top:425px;width:61px">0.00000</div>
<div class="t g r" style="left:960px;top:425px;width:61px">0.00000</div>
<div class="t g c" style="left:0px;top:442px;width:63px">0.75</div>
<div class="t g r" style="left:64px;top:442px;width:61px">0.00000</div>
<div class="t g r" style="left:384px;top:442px;width:61px">0.00000</div>
<div class="t g r" style="left:704px;top:442px;width:61px">0.00000</div>
<div class="t g r" style="left:128px;top:442px;width:61px">0.00000</div>
<div class="t g r" style="left:448px;top:442px;width:61px">0.00000</div>
<div class="t g r" style="left:768px;top:442px;width:61px">0.00000</div>
<div class="t g r" style="left:192px;top:442px;width:61px">0.00000</div>
<div class="t g r" style="left:512px;top:442px;width:61px">0.00000</div>
<div class="t g r" style="left:832px;top:442px;width:61px">0.00000</div>
<div class="t g r" style="left:256px;top:442px;width:61px">0.00000</div>
<div class="t g r" style="left:576px;top:442px;width:61px">0.00000</div>
<div class="t g r" style="left:896px;top:442px;width:61px">0.00000</div>
<div class="t g r" style="left:320px;top:442px;width:61px">0.00000</div>
<div class="t g r" style="left:640px;top:442px;width:61px">0.00000</div>
<div class="t g r" style="left:960px;top:442px;width:61px">0.00000</div>
<div class="t g c" style="left:0px;top:459px;width:63px">0.80</div>
<div class="t g r" style="left:64px;top:459px;width:61px">0.00000</div>
<div class="t g r" style="left:384px;top:459px;width:61px">0.00000</div>
<div class="t g r" style="left:704px;top:459px;width:61px">0.00000</div>
<div class="t g r" style="left:128px;top:459px;width:61px">0.00000</div>
<div class="t g r" style="left:448px;top:459px;width:61px">0.00000</div>
<div class="t g r" style="left:768px;top:459px;width:61px">0.00000</div>
<div class="t g r" style="left:192px;top:459px;width:61px">0.00000</div>
<div class="t g r" style="left:512px;top:459px;width:61px">0.00000</div>
<div class="t g r" style="left:832px;top:459px;width:61px">0.00000</div>
<div class="t g r" style="left:256px;top:459px;width:61px">0.00000</div>
<div class="t g r" style="left:576px;top:459px;width:61px">0.00000</div>
<div class="t g r" style="left:896px;top:459px;width:61px">0.00000</div>
<div class="t g r" style="left:320px;top:459px;width:61px">0.00000</div>
<div class="t g r" style="left:640px;top:459px;width:61px">0.00000</div>
<div class="t g r" style="left:960px;top:459px;width:61px">0.00000</div>
<div class="t g c" style="left:0px;top:476px;width:63px">0.85</div>
<div class="t g r" style="left:64px;top:476px;width:61px">0.00000</div>
<div class="t g r" style="left:384px;top:476px;width:61px">0.00000</div>
<div class="t g r" style="left:704px;top:476px;width:61px">0.00000</div>
<div class="t g r" style="left:128px;top:476px;width:61px">0.00000</div>
<div class="t g r" style="left:448px;top:476px;width:61px">0.00000</div>
<div class="t g r" style="left:768px;top:476px;width:61px">0.00000</div>
<div class="t g r" style="left:192px;top:476px;width:61px">0.00000</div>
<div class="t g r" style="left:512px;top:476px;width:61px">0.00000</div>
<div class="t g r" style="left:832px;top:476px;width:61px">0.00000</div>
<div class="t g r" style="left:256px;top:476px;width:61px">0.00000</div>
<div class="t g r" style="left:576px;top:476px;width:61px">0.00000</div>
<div class="t g r" style="left:896px;top:476px;width:61px">0.00000</div>
<div class="t g r" style="left:320px;top:476px;width:61px">0.00000</div>
<div class="t g r" style="left:640px;top:476px;width:61px">0.00000</div>
<div class="t g r" style="left:960px;top:476px;width:61px">0.00000</div>
<div class="t g c" style="left:0px;top:493px;width:63px">0.90</div>
<div class="t g r" style="left:64px;top:493px;width:61px">0.00000</div>
<div class="t g r" style="left:384px;top:493px;width:61px">0.00000</div>
<div class="t g r" style="left:704px;top:493px;width:61px">0.00000</div>
<div class="t g r" style="left:128px;top:493px;width:61px">0.00000</div>
<div class="t g r" style="left:448px;top:493px;width:61px">0.00000</div>
<div class="t g r" style="left:768px;top:493px;width:61px">0.00000</div>
<div class="t g r" style="left:192px;top:493px;width:61px">0.00000</div>
<div class="t g r" style="left:512px;top:493px;width:61px">0.00000</div>
<div class="t g r" style="left:832px;top:493px;width:61px">0.00000</div>
<div class="t g r" style="left:256px;top:493px;width:61px">0.00000</div>
<div class="t g r" style="left:576px;top:493px;width:61px">0.00000</div>
<div class="t g r" style="left:896px;top:493px;width:61px">0.00000</div>
<div class="t g r" style="left:320px;top:493px;width:61px">0.00000</div>
<div class="t g r" style="left:640px;top:493px;width:61px">0.00000</div>
<div class="t g r" style="left:960px;top:493px;width:61px">0.00000</div>
<div class="t g c" style="left:0px;top:510px;width:63px">0.95</div>
<div class="t g r" style="left:64px;top:510px;width:61px">0.00000</div>
<div class="t g r" style="left:384px;top:510px;width:61px">0.00000</div>
<div class="t g r" style="left:704px;top:510px;width:61px">0.00000</div>
<div class="t g r" style="left:128px;top:510px;width:61px">0.00000</div>
<div class="t g r" style="left:448px;top:510px;width:61px">0.00000</div>
<div class="t g r" style="left:768px;top:510px;width:61px">0.00000</div>
<div class="t g r" style="left:192px;top:510px;width:61px">0.00000</div>
<div class="t g r" style="left:512px;top:510px;width:61px">0.00000</div>
<div class="t g r" style="left:832px;top:510px;width:61px">0.00000</div>
<div class="t g r" style="left:256px;top:510px;width:61px">0.00000</div>
<div class="t g r" style="left:576px;top:510px;width:61px">0.00000</div>
<div class="t g r" style="left:896px;top:510px;width:61px">0.00000</div>
<div class="t g r" style="left:320px;top:510px;width:61px">0.00000</div>
<div class="t g r" style="left:640px;top:510px;width:61px">0.00000</div>
<div class="t g r" style="left:960px;top:510px;width:61px">0.00000</div>
<div class="t g c" style="left:0px;top:527px;width:63px">1.00</div>
<div class="t g r" style="left:64px;top:527px;width:61px">0.00000</div>
<div class="t g r" style="left:384px;top:527px;width:61px">0.00000</div>
<div class="t g r" style="left:704px;top:527px;width:61px">0.00000</div>
<div class="t g r" style="left:128px;top:527px;width:61px">0.00000</div>
<div class="t g r" style="left:448px;top:527px;width:61px">0.00000</div>
<div class="t g r" style="left:768px;top:527px;width:61px">0.00000</div>
<div class="t g r" style="left:192px;top:527px;width:61px">0.00000</div>
<div class="t g r" style="left:512px;top:527px;width:61px">0.00000</div>
<div class="t g r" style="left:832px;top:527px;width:61px">0.00000</div>
<div class="t g r" style="left:256px;top:527px;width:61px">0.00000</div>
<div class="t g r" style="left:576px;top:527px;width:61px">0.00000</div>
<div class="t g r" style="left:896px;top:527px;width:61px">0.00000</div>
<div class="t g r" style="left:320px;top:527px;width:61px">0.00000</div>
<div class="t g r" style="left:640px;top:527px;width:61px">0.00000</div>
<div class="t g r" style="left:960px;top:527px;width:61px">0.00000</div>
<div class="t g c" style="left:0px;top:544px;width:63px">1.05</div>
<div class="t g r" style="left:64px;top:544px;width:61px">0.00000</div>
<div class="t g r" style="left:384px;top:544px;width:61px">0.00000</div>
<div class="t g r" style="left:704px;top:544px;width:61px">0.00000</div>
<div class="t g r" style="left:128px;top:544px;width:61px">0.00000</div>
<div class="t g r" style="left:448px;top:544px;width:61px">0.00000</div>
<div class="t g r" style="left:768px;top:544px;width:61px">0.00000</div>
<div class="t g r" style="left:192px;top:544px;width:61px">0.00000</div>
<div class="t g r" style="left:512px;top:544px;width:61px">0.00000</div>
<div class="t g r" style="left:832px;top:544px;width:61px">0.00000</div>
<div class="t g r" style="left:256px;top:544px;width:61px">0.00000</div>
<div class="t g r" style="left:576px;top:544px;width:61px">0.00000</div>
<div class="t g r" style="left:896px;top:544px;width:61px">0.00000</div>
<div class="t g r" style="left:320px;top:544px;width:61px">0.00000</div>
<div class="t g r" style="left:640px;top:544px;width:61px">0.00000</div>
<div class="t g r" style="left:960px;top:544px;width:61px">0.00000</div>
<div class="t g c" style="left:0px;top:561px;width:63px">1.10</div>
<div class="t g r" style="left:64px;top:561px;width:61px">0.00002</div>
<div class="t g r" style="left:384px;top:561px;width:61px">0.00002</div>
<div class="t g r" style="left:704px;top:561px;width:61px">0.00000</div>
<div class="t g r" style="left:128px;top:561px;width:61px">0.00002</div>
<div class="t g r" style="left:448px;top:561px;width:61px">0.00002</div>
<div class="t g r" style="left:768px;top:561px;width:61px">0.00000</div>
<div class="t g r" style="left:192px;top:561px;width:61px">0.00002</div>
<div class="t g r" style="left:512px;top:561px;width:61px">0.00002</div>
<div class="t g r" style="left:832px;top:561px;width:61px">0.00000</div>
<div class="t g r" style="left:256px;top:561px;width:61px">0.00002</div>
<div class="t g r" style="left:576px;top:561px;width:61px">0.00002</div>
<div class="t g r" style="left:896px;top:561px;width:61px">0.00000</div>
<div class="t g r" style="left:320px;top:561px;width:61px">0.00001</div>
<div class="t g r" style="left:640px;top:561px;width:61px">0.00001</div>
<div class="t g r" style="left:960px;top:561px;width:61px">0.00000</div>
<div class="t g c" style="left:0px;top:578px;width:63px">1.15</div>
<div class="t g r" style="left:64px;top:578px;width:61px">0.00011</div>
<div class="t g r" style="left:384px;top:578px;width:61px">0.00011</div>
<div class="t g r" style="left:704px;top:578px;width:61px">0.00000</div>
<div class="t g r" style="left:128px;top:578px;width:61px">0.00010</div>
<div class="t g r" style="left:448px;top:578px;width:61px">0.00010</div>
<div class="t g r" style="left:768px;top:578px;width:61px">0.00000</div>
<div class="t g r" style="left:192px;top:578px;width:61px">0.00009</div>
<div class="t g r" style="left:512px;top:578px;width:61px">0.00009</div>
<div class="t g r" style="left:832px;top:578px;width:61px">0.00000</div>
<div class="t g r" style="left:256px;top:578px;width:61px">0.00008</div>
<div class="t g r" style="left:576px;top:578px;width:61px">0.00008</div>
<div class="t g r" style="left:896px;top:578px;width:61px">0.00000</div>
<div class="t g r" style="left:320px;top:578px;width:61px">0.00006</div>
<div class="t g r" style="left:640px;top:578px;width:61px">0.00006</div>
<div class="t g r" style="left:960px;top:578px;width:61px">0.00000</div>
<div class="t g c" style="left:0px;top:595px;width:63px">1.20</div>
<div class="t g r" style="left:64px;top:595px;width:61px">0.00047</div>
<div class="t g r" style="left:384px;top:595px;width:61px">0.00047</div>
<div class="t g r" style="left:704px;top:595px;width:61px">0.00000</div>
<div class="t g r" style="left:128px;top:595px;width:61px">0.00042</div>
<div class="t g r" style="left:448px;top:595px;width:61px">0.00042</div>
<div class="t g r" style="left:768px;top:595px;width:61px">0.00000</div>
<div class="t g r" style="left:192px;top:595px;width:61px">0.00037</div>
<div class="t g r" style="left:512px;top:595px;width:61px">0.00037</div>
<div class="t g r" style="left:832px;top:595px;width:61px">0.00000</div>
<div class="t g r" style="left:256px;top:595px;width:61px">0.00031</div>
<div class="t g r" style="left:576px;top:595px;width:61px">0.00031</div>
<div class="t g r" style="left:896px;top:595px;width:61px">0.00000</div>
<div class="t g r" style="left:320px;top:595px;width:61px">0.00026</div>
<div class="t g r" style="left:640px;top:595px;width:61px">0.00026</div>
<div class="t g r" style="left:960px;top:595px;width:61px">0.00000</div>
<div class="t g c" style="left:0px;top:612px;width:63px">1.25</div>
<div class="t g r" style="left:64px;top:612px;width:61px">0.00160</div>
<div class="t g r" style="left:384px;top:612px;width:61px">0.00160</div>
<div class="t g r" style="left:704px;top:612px;width:61px">0.00000</div>
<div class="t g r" style="left:128px;top:612px;width:61px">0.00142</div>
<div class="t g r" style="left:448px;top:612px;width:61px">0.00142</div>
<div class="t g r" style="left:768px;top:612px;width:61px">0.00000</div>
<div class="t g r" style="left:192px;top:612px;width:61px">0.00126</div>
<div class="t g r" style="left:512px;top:612px;width:61px">0.00126</div>
<div class="t g r" style="left:832px;top:612px;width:61px">0.00000</div>
<div class="t g r" style="left:256px;top:612px;width:61px">0.00105</div>
<div class="t g r" style="left:576px;top:612px;width:61px">0.00105</div>
<div class="t g r" style="left:896px;top:612px;width:61px">0.00000</div>
<div class="t g r" style="left:320px;top:612px;width:61px">0.00088</div>
<div class="t g r" style="left:640px;top:612px;width:61px">0.00088</div>
<div class="t g r" style="left:960px;top:612px;width:61px">0.00000</div>
</div>
<div class="a" style="left:91px;top:95px;width:1px;height:16px;background:#9d9b8c"></div>
<div class="t g c" style="left:28px;top:95px;width:63px;height:16px;line-height:16px">A</div>
<div class="a" style="left:155px;top:95px;width:1px;height:16px;background:#9d9b8c"></div>
<div class="a" style="left:91px;top:94px;width:65px;height:18px;background:linear-gradient(#ffcc88,#ffc078);border:1px solid #1e1646;border-top:1px solid #716f64"></div>
<div class="t g c" style="left:92px;top:95px;width:63px;height:16px;line-height:16px">B</div>
<div class="a" style="left:219px;top:95px;width:1px;height:16px;background:#9d9b8c"></div>
<div class="t g c" style="left:156px;top:95px;width:63px;height:16px;line-height:16px">C</div>
<div class="a" style="left:283px;top:95px;width:1px;height:16px;background:#9d9b8c"></div>
<div class="t g c" style="left:220px;top:95px;width:63px;height:16px;line-height:16px">D</div>
<div class="a" style="left:347px;top:95px;width:1px;height:16px;background:#9d9b8c"></div>
<div class="t g c" style="left:284px;top:95px;width:63px;height:16px;line-height:16px">E</div>
<div class="a" style="left:411px;top:95px;width:1px;height:16px;background:#9d9b8c"></div>
<div class="t g c" style="left:348px;top:95px;width:63px;height:16px;line-height:16px">F</div>
<div class="a" style="left:475px;top:95px;width:1px;height:16px;background:#9d9b8c"></div>
<div class="t g c" style="left:412px;top:95px;width:63px;height:16px;line-height:16px">G</div>
<div class="a" style="left:539px;top:95px;width:1px;height:16px;background:#9d9b8c"></div>
<div class="t g c" style="left:476px;top:95px;width:63px;height:16px;line-height:16px">H</div>
<div class="a" style="left:603px;top:95px;width:1px;height:16px;background:#9d9b8c"></div>
<div class="t g c" style="left:540px;top:95px;width:63px;height:16px;line-height:16px">I</div>
<div class="a" style="left:667px;top:95px;width:1px;height:16px;background:#9d9b8c"></div>
<div class="t g c" style="left:604px;top:95px;width:63px;height:16px;line-height:16px">J</div>
<div class="a" style="left:731px;top:95px;width:1px;height:16px;background:#9d9b8c"></div>
<div class="t g c" style="left:668px;top:95px;width:63px;height:16px;line-height:16px">K</div>
<div class="a" style="left:795px;top:95px;width:1px;height:16px;background:#9d9b8c"></div>
<div class="t g c" style="left:732px;top:95px;width:63px;height:16px;line-height:16px">L</div>
<div class="a" style="left:859px;top:95px;width:1px;height:16px;background:#9d9b8c"></div>
<div class="t g c" style="left:796px;top:95px;width:63px;height:16px;line-height:16px">M</div>
<div class="a" style="left:923px;top:95px;width:1px;height:16px;background:#9d9b8c"></div>
<div class="t g c" style="left:860px;top:95px;width:63px;height:16px;line-height:16px">N</div>
<div class="a" style="left:987px;top:95px;width:1px;height:16px;background:#9d9b8c"></div>
<div class="t g c" style="left:924px;top:95px;width:63px;height:16px;line-height:16px">O</div>
<div class="a" style="left:1051px;top:95px;width:1px;height:16px;background:#9d9b8c"></div>
<div class="t g c" style="left:988px;top:95px;width:63px;height:16px;line-height:16px">P</div>
<div class="a" style="left:0;top:94px;width:1px;height:638px;background:#c4c2b4"></div><div class="a" style="left:1px;top:94px;width:1px;height:638px;background:#7f7d70"></div>
<div class="a" style="left:27px;top:94px;width:1px;height:638px;background:#716f64"></div>
<div class="a" style="left:1px;top:111px;width:27px;height:1px;background:#8a887a"></div>
<div class="a" style="left:2px;top:128px;width:25px;height:1px;background:#aca899"></div>
<div class="t g c" style="left:2px;top:112px;width:26px;height:16px;line-height:17px">1</div>
<div class="a" style="left:2px;top:145px;width:25px;height:1px;background:#aca899"></div>
<div class="t g c" style="left:2px;top:129px;width:26px;height:16px;line-height:17px">2</div>
<div class="a" style="left:2px;top:162px;width:25px;height:1px;background:#aca899"></div>
<div class="t g c" style="left:2px;top:146px;width:26px;height:16px;line-height:17px">3</div>
<div class="a" style="left:2px;top:179px;width:25px;height:1px;background:#aca899"></div>
<div class="t g c" style="left:2px;top:163px;width:26px;height:16px;line-height:17px">4</div>
<div class="a" style="left:2px;top:196px;width:25px;height:1px;background:#aca899"></div>
<div class="t g c" style="left:2px;top:180px;width:26px;height:16px;line-height:17px">5</div>
<div class="a" style="left:2px;top:213px;width:25px;height:1px;background:#aca899"></div>
<div class="t g c" style="left:2px;top:197px;width:26px;height:16px;line-height:17px">6</div>
<div class="a" style="left:2px;top:230px;width:25px;height:1px;background:#aca899"></div>
<div class="t g c" style="left:2px;top:214px;width:26px;height:16px;line-height:17px">7</div>
<div class="a" style="left:2px;top:247px;width:25px;height:1px;background:#aca899"></div>
<div class="t g c" style="left:2px;top:231px;width:26px;height:16px;line-height:17px">8</div>
<div class="a" style="left:2px;top:264px;width:25px;height:1px;background:#aca899"></div>
<div class="t g c" style="left:2px;top:248px;width:26px;height:16px;line-height:17px">9</div>
<div class="a" style="left:2px;top:281px;width:25px;height:1px;background:#aca899"></div>
<div class="t g c" style="left:2px;top:265px;width:26px;height:16px;line-height:17px">10</div>
<div class="a" style="left:2px;top:298px;width:25px;height:1px;background:#aca899"></div>
<div class="t g c" style="left:2px;top:282px;width:26px;height:16px;line-height:17px">11</div>
<div class="a" style="left:1px;top:298px;width:27px;height:18px;background:linear-gradient(90deg,#ffc078,#ffcc88);border-bottom:1px solid #1e1646;border-right:1px solid #1e1646;border-top:1px solid #716f64"></div>
<div class="a" style="left:2px;top:315px;width:25px;height:1px;background:#aca899"></div>
<div class="t g c" style="left:2px;top:299px;width:26px;height:16px;line-height:17px">12</div>
<div class="a" style="left:2px;top:332px;width:25px;height:1px;background:#aca899"></div>
<div class="t g c" style="left:2px;top:316px;width:26px;height:16px;line-height:17px">13</div>
<div class="a" style="left:2px;top:349px;width:25px;height:1px;background:#aca899"></div>
<div class="t g c" style="left:2px;top:333px;width:26px;height:16px;line-height:17px">14</div>
<div class="a" style="left:2px;top:366px;width:25px;height:1px;background:#aca899"></div>
<div class="t g c" style="left:2px;top:350px;width:26px;height:16px;line-height:17px">15</div>
<div class="a" style="left:2px;top:383px;width:25px;height:1px;background:#aca899"></div>
<div class="t g c" style="left:2px;top:367px;width:26px;height:16px;line-height:17px">16</div>
<div class="a" style="left:2px;top:400px;width:25px;height:1px;background:#aca899"></div>
<div class="t g c" style="left:2px;top:384px;width:26px;height:16px;line-height:17px">17</div>
<div class="a" style="left:2px;top:417px;width:25px;height:1px;background:#aca899"></div>
<div class="t g c" style="left:2px;top:401px;width:26px;height:16px;line-height:17px">18</div>
<div class="a" style="left:2px;top:434px;width:25px;height:1px;background:#aca899"></div>
<div class="t g c" style="left:2px;top:418px;width:26px;height:16px;line-height:17px">19</div>
<div class="a" style="left:2px;top:451px;width:25px;height:1px;background:#aca899"></div>
<div class="t g c" style="left:2px;top:435px;width:26px;height:16px;line-height:17px">20</div>
<div class="a" style="left:2px;top:468px;width:25px;height:1px;background:#aca899"></div>
<div class="t g c" style="left:2px;top:452px;width:26px;height:16px;line-height:17px">21</div>
<div class="a" style="left:2px;top:485px;width:25px;height:1px;background:#aca899"></div>
<div class="t g c" style="left:2px;top:469px;width:26px;height:16px;line-height:17px">22</div>
<div class="a" style="left:2px;top:502px;width:25px;height:1px;background:#aca899"></div>
<div class="t g c" style="left:2px;top:486px;width:26px;height:16px;line-height:17px">23</div>
<div class="a" style="left:2px;top:519px;width:25px;height:1px;background:#aca899"></div>
<div class="t g c" style="left:2px;top:503px;width:26px;height:16px;line-height:17px">24</div>
<div class="a" style="left:2px;top:536px;width:25px;height:1px;background:#aca899"></div>
<div class="t g c" style="left:2px;top:520px;width:26px;height:16px;line-height:17px">25</div>
<div class="a" style="left:2px;top:553px;width:25px;height:1px;background:#aca899"></div>
<div class="t g c" style="left:2px;top:537px;width:26px;height:16px;line-height:17px">26</div>
<div class="a" style="left:2px;top:570px;width:25px;height:1px;background:#aca899"></div>
<div class="t g c" style="left:2px;top:554px;width:26px;height:16px;line-height:17px">27</div>
<div class="a" style="left:2px;top:587px;width:25px;height:1px;background:#aca899"></div>
<div class="t g c" style="left:2px;top:571px;width:26px;height:16px;line-height:17px">28</div>
<div class="a" style="left:2px;top:604px;width:25px;height:1px;background:#aca899"></div>
<div class="t g c" style="left:2px;top:588px;width:26px;height:16px;line-height:17px">29</div>
<div class="a" style="left:2px;top:621px;width:25px;height:1px;background:#aca899"></div>
<div class="t g c" style="left:2px;top:605px;width:26px;height:16px;line-height:17px">30</div>
<div class="a" style="left:2px;top:638px;width:25px;height:1px;background:#aca899"></div>
<div class="t g c" style="left:2px;top:622px;width:26px;height:16px;line-height:17px">31</div>
<div class="a" style="left:2px;top:655px;width:25px;height:1px;background:#aca899"></div>
<div class="t g c" style="left:2px;top:639px;width:26px;height:16px;line-height:17px">32</div>
<div class="a" style="left:2px;top:672px;width:25px;height:1px;background:#aca899"></div>
<div class="t g c" style="left:2px;top:656px;width:26px;height:16px;line-height:17px">33</div>
<div class="a" style="left:2px;top:689px;width:25px;height:1px;background:#aca899"></div>
<div class="t g c" style="left:2px;top:673px;width:26px;height:16px;line-height:17px">34</div>
<div class="a" style="left:2px;top:706px;width:25px;height:1px;background:#aca899"></div>
<div class="t g c" style="left:2px;top:690px;width:26px;height:16px;line-height:17px">35</div>
<div class="a" style="left:2px;top:723px;width:25px;height:1px;background:#aca899"></div>
<div class="t g c" style="left:2px;top:707px;width:26px;height:16px;line-height:17px">36</div>
<div class="a" style="left:2px;top:740px;width:25px;height:1px;background:#aca899"></div>
<div class="t g c" style="left:2px;top:724px;width:26px;height:16px;line-height:17px">37</div>
<div class="a" style="left:90px;top:298px;width:67px;height:19px;border:3px solid #000;border-top-width:2px"></div>
<div class="a" style="left:153px;top:313px;width:6px;height:6px;background:#000;border:1px solid #fff"></div>
<svg class="a" style="left:432px;top:353px" width="518" height="305" viewBox="432 353 518 305"><rect x="432" y="353" width="518" height="305" fill="#fff"/><path d="M503.5 375.5H903.5V587.5" fill="none" stroke="#808080" stroke-width="1"/><polyline points="503.50,587.50 508.50,587.50 513.50,587.50 518.50,587.50 523.50,587.50 528.50,587.50 533.50,587.50 538.50,587.50 543.50,587.50 548.50,587.50 553.50,587.50 558.50,587.50 563.50,587.50 568.50,587.50 573.50,587.50 578.50,587.50 583.50,587.50 588.50,587.50 593.50,587.50 598.50,587.50 603.50,587.50 608.50,587.50 613.50,587.50 618.50,587.48 623.50,587.40 628.50,587.16 633.50,586.51 638.50,585.02 643.50,582.03 648.50,576.75 653.50,568.42 658.50,556.54 663.50,541.09 668.50,522.59 673.50,502.09 678.50,480.87 683.50,460.29 688.50,441.44 693.50,425.09 698.50,411.60 703.50,400.95 708.50,392.91 713.50,387.07 718.50,382.98 723.50,380.20 728.50,378.39 733.50,377.23 738.50,376.51 743.50,376.08 748.50,375.83 753.50,375.68 758.50,375.60 763.50,375.55 768.50,375.53 773.50,375.51 778.50,375.51 783.50,375.50 788.50,375.50 793.50,375.50 798.50,375.50 803.50,375.50 808.50,375.50 813.50,375.50 818.50,375.50 823.50,375.50 828.50,375.50 833.50,375.50 838.50,375.50 843.50,375.50 848.50,375.50 853.50,375.50 858.50,375.50" fill="none" stroke="#000080" stroke-width="1" shape-rendering="crispEdges"/><polyline points="503.50,587.50 508.50,587.50 513.50,587.50 518.50,587.50 523.50,587.50 528.50,587.50 533.50,587.50 538.50,587.50 543.50,587.50 548.50,587.50 553.50,587.50 558.50,587.50 563.50,587.50 568.50,587.50 573.50,587.50 578.50,587.50 583.50,587.50 588.50,587.50 593.50,587.50 598.50,587.50 603.50,587.50 608.50,587.50 613.50,587.50 618.50,587.48 623.50,587.41 628.50,587.20 633.50,586.63 638.50,585.32 643.50,582.72 648.50,578.14 653.50,570.95 658.50,560.76 663.50,547.55 668.50,531.84 673.50,514.49 678.50,496.64 683.50,479.40 688.50,463.70 693.50,450.14 698.50,439.01 703.50,430.27 708.50,423.70 713.50,418.96 718.50,415.65 723.50,413.42 728.50,411.96 733.50,411.04 738.50,410.47 743.50,410.13 748.50,409.93 753.50,409.82 758.50,409.75 763.50,409.72 768.50,409.70 773.50,409.69 778.50,409.68 783.50,409.68 788.50,409.68 793.50,409.68 798.50,409.68 803.50,409.68 808.50,409.68 813.50,409.68 818.50,409.68 823.50,409.68 828.50,409.68 833.50,409.68 838.50,409.68 843.50,409.68 848.50,409.68 853.50,409.68 858.50,409.68" fill="none" stroke="#ff00ff" stroke-width="1" shape-rendering="crispEdges"/><polyline points="503.50,587.50 508.50,587.50 513.50,587.50 518.50,587.50 523.50,587.50 528.50,587.50 533.50,587.50 538.50,587.50 543.50,587.50 548.50,587.50 553.50,587.50 558.50,587.50 563.50,587.50 568.50,587.50 573.50,587.50 578.50,587.50 583.50,587.50 588.50,587.50 593.50,587.50 598.50,587.50 603.50,587.50 608.50,587.50 613.50,587.50 618.50,587.48 623.50,587.42 628.50,587.23 633.50,586.73 638.50,585.59 643.50,583.32 648.50,579.35 653.50,573.15 658.50,564.40 663.50,553.12 668.50,539.76 673.50,525.09 678.50,510.07 683.50,495.63 688.50,482.55 693.50,471.31 698.50,462.12 703.50,454.95 708.50,449.59 713.50,445.73 718.50,443.05 723.50,441.26 728.50,440.09 733.50,439.36 738.50,438.91 743.50,438.64 748.50,438.48 753.50,438.39 758.50,438.34 763.50,438.31 768.50,438.30 773.50,438.29 778.50,438.29 783.50,438.29 788.50,438.28 793.50,438.28 798.50,438.28 803.50,438.28 808.50,438.28 813.50,438.28 818.50,438.28 823.50,438.28 828.50,438.28 833.50,438.28 838.50,438.28 843.50,438.28 848.50,438.28 853.50,438.28 858.50,438.28" fill="none" stroke="#ffff00" stroke-width="1" shape-rendering="crispEdges"/><polyline points="503.50,587.50 508.50,587.50 513.50,587.50 518.50,587.50 523.50,587.50 528.50,587.50 533.50,587.50 538.50,587.50 543.50,587.50 548.50,587.50 553.50,587.50 558.50,587.50 563.50,587.50 568.50,587.50 573.50,587.50 578.50,587.50 583.50,587.50 588.50,587.50 593.50,587.50 598.50,587.50 603.50,587.50 608.50,587.50 613.50,587.50 618.50,587.48 623.50,587.43 628.50,587.28 633.50,586.86 638.50,585.92 643.50,584.08 648.50,580.88 653.50,575.91 658.50,568.95 663.50,560.04 668.50,549.57 673.50,538.16 678.50,526.57 683.50,515.50 688.50,505.55 693.50,497.07 698.50,490.19 703.50,484.85 708.50,480.89 713.50,478.06 718.50,476.12 723.50,474.82 728.50,473.99 733.50,473.46 738.50,473.15 743.50,472.96 748.50,472.85 753.50,472.79 758.50,472.75 763.50,472.74 768.50,472.73 773.50,472.72 778.50,472.72 783.50,472.72 788.50,472.72 793.50,472.72 798.50,472.72 803.50,472.72 808.50,472.72 813.50,472.72 818.50,472.72 823.50,472.72 828.50,472.72 833.50,472.72 838.50,472.72 843.50,472.72 848.50,472.72 853.50,472.72 858.50,472.72" fill="none" stroke="#00ffff" stroke-width="1" shape-rendering="crispEdges"/><polyline points="503.50,587.50 508.50,587.50 513.50,587.50 518.50,587.50 523.50,587.50 528.50,587.50 533.50,587.50 538.50,587.50 543.50,587.50 548.50,587.50 553.50,587.50 558.50,587.50 563.50,587.50 568.50,587.50 573.50,587.50 578.50,587.50 583.50,587.50 588.50,587.50 593.50,587.50 598.50,587.50 603.50,587.50 608.50,587.50 613.50,587.50 618.50,587.49 623.50,587.44 628.50,587.31 633.50,586.97 638.50,586.20 643.50,584.70 648.50,582.11 653.50,578.13 658.50,572.59 663.50,565.55 668.50,557.34 673.50,548.46 678.50,539.49 683.50,531.01 688.50,523.43 693.50,517.02 698.50,511.86 703.50,507.89 708.50,504.96 713.50,502.88 718.50,501.47 723.50,500.53 728.50,499.93 733.50,499.56 738.50,499.34 743.50,499.20 748.50,499.13 753.50,499.08 758.50,499.06 763.50,499.05 768.50,499.04 773.50,499.04 778.50,499.04 783.50,499.04 788.50,499.04 793.50,499.04 798.50,499.04 803.50,499.04 808.50,499.04 813.50,499.04 818.50,499.04 823.50,499.04 828.50,499.04 833.50,499.04 838.50,499.04 843.50,499.04 848.50,499.04 853.50,499.04 858.50,499.04" fill="none" stroke="#800080" stroke-width="1" shape-rendering="crispEdges"/><path d="M503.5 375.5V591.5M499.5 587.5H903.5" stroke="#000" stroke-width="1" fill="none"/><path d="M499.5 587.5H503.5M499.5 566.5H503.5M499.5 545.5H503.5M499.5 523.5H503.5M499.5 502.5H503.5M499.5 481.5H503.5M499.5 460.5H503.5M499.5 439.5H503.5M499.5 417.5H503.5M499.5 396.5H503.5M499.5 375.5H503.5M503.5 587.5V591.5M603.5 587.5V591.5M703.5 587.5V591.5M803.5 587.5V591.5M903.5 587.5V591.5" stroke="#000" stroke-width="1" fill="none"/></svg>
<div class="t g r" style="left:450px;top:579px;width:43px">0.0</div>
<div class="t g r" style="left:450px;top:558px;width:43px">0.1</div>
<div class="t g r" style="left:450px;top:537px;width:43px">0.2</div>
<div class="t g r" style="left:450px;top:515px;width:43px">0.3</div>
<div class="t g r" style="left:450px;top:494px;width:43px">0.4</div>
<div class="t g r" style="left:450px;top:473px;width:43px">0.5</div>
<div class="t g r" style="left:450px;top:452px;width:43px">0.6</div>
<div class="t g r" style="left:450px;top:431px;width:43px">0.7</div>
<div class="t g r" style="left:450px;top:409px;width:43px">0.8</div>
<div class="t g r" style="left:450px;top:388px;width:43px">0.9</div>
<div class="t g r" style="left:450px;top:367px;width:43px">1.0</div>
<div class="t g c" style="left:473px;top:598px;width:61px;letter-spacing:0.7px">0.00</div>
<div class="t g c" style="left:573px;top:598px;width:61px;letter-spacing:0.7px">1.00</div>
<div class="t g c" style="left:673px;top:598px;width:61px;letter-spacing:0.7px">2.00</div>
<div class="t g c" style="left:773px;top:598px;width:61px;letter-spacing:0.7px">3.00</div>
<div class="t g c" style="left:873px;top:598px;width:61px;letter-spacing:0.7px">4.00</div>
<div class="t g c" style="left:673px;top:621px;width:60px">T</div>
<div class="t g c" style="left:428px;top:472px;width:60px;transform:rotate(-90deg) scaleX(.92)">Cm</div>
<div class="a" style="left:519px;top:423px;width:24px;height:1px;background:#000080"></div>
<div class="t g" style="left:547px;top:416px;transform:none">&mu;=0.000</div>
<div class="a" style="left:519px;top:445px;width:24px;height:1px;background:#ff00ff"></div>
<div class="t g" style="left:547px;top:438px;transform:none">&mu;=0.176</div>
<div class="a" style="left:519px;top:467px;width:24px;height:1px;background:#ffff00"></div>
<div class="t g" style="left:547px;top:460px;transform:none">&mu;=0.352</div>
<div class="a" style="left:519px;top:489px;width:24px;height:1px;background:#00ffff"></div>
<div class="t g" style="left:547px;top:482px;transform:none">&mu;=0.616</div>
<div class="a" style="left:519px;top:511px;width:24px;height:1px;background:#800080"></div>
<div class="t g" style="left:547px;top:504px;transform:none">&mu;=0.879</div>
<div class="a" style="left:1006px;top:94px;width:19px;height:638px;background:#fbfbf8"></div>
<div class="a" style="left:1006px;top:94px;width:19px;height:18px;background:#ebeadb"></div>
<div class="a" style="left:1007px;top:99px;width:15px;height:2px;background:#000"></div>
<div class="a" style="left:1007px;top:102px;width:15px;height:14px;border-radius:2px;background:linear-gradient(90deg,#c5d5fb,#b7cbf6);border:1px solid #dbe6fb"></div>
<div class="a" style="left:1011px;top:105px;width:6px;height:6px;border-left:2px solid #4d6185;border-top:2px solid #4d6185;transform:rotate(45deg)"></div>
<div class="a" style="left:1007px;top:119px;width:15px;height:109px;border-radius:2px;background:linear-gradient(90deg,#cbdaf9,#b9ccf7);border:1px solid #e3ebfb"></div>
<div class="a" style="left:1011px;top:170px;width:7px;height:1px;background:#eef3fd;box-shadow:1px 1px 0 #8ca2d6"></div>
<div class="a" style="left:1011px;top:172px;width:7px;height:1px;background:#eef3fd;box-shadow:1px 1px 0 #8ca2d6"></div>
<div class="a" style="left:1011px;top:174px;width:7px;height:1px;background:#eef3fd;box-shadow:1px 1px 0 #8ca2d6"></div>
<div class="a" style="left:1011px;top:176px;width:7px;height:1px;background:#eef3fd;box-shadow:1px 1px 0 #8ca2d6"></div>
<div class="a" style="left:1007px;top:716px;width:15px;height:15px;border-radius:2px;background:linear-gradient(90deg,#c5d5fb,#b7cbf6);border:1px solid #dbe6fb"></div>
<div class="a" style="left:1011px;top:718px;width:6px;height:6px;border-right:2px solid #4d6185;border-bottom:2px solid #4d6185;transform:rotate(45deg)"></div>
<div class="a" style="left:0;top:732px;width:1025px;height:16px;background:#ebeadb"></div>
<div class="a" style="left:0;top:94px;width:1px;height:654px;background:#c4c2b4"></div><div class="a" style="left:1px;top:94px;width:1px;height:654px;background:#7f7d70"></div>
<div class="a" style="left:5px;top:736px;width:2px;height:8px;background:#000"></div><div class="a" style="left:7px;top:736px;border-top:4px solid transparent;border-bottom:4px solid transparent;border-right:4px solid #000"></div>
<div class="a" style="left:23px;top:736px;border-top:4px solid transparent;border-bottom:4px solid transparent;border-right:4px solid #000"></div>
<div class="a" style="left:40px;top:736px;border-top:4px solid transparent;border-bottom:4px solid transparent;border-left:4px solid #000"></div>
<div class="a" style="left:55px;top:736px;border-top:4px solid transparent;border-bottom:4px solid transparent;border-left:4px solid #000"></div><div class="a" style="left:59px;top:736px;width:2px;height:8px;background:#000"></div>
<div class="a" style="left:65px;top:732px;width:1px;height:15px;background:#aca899"></div>
<svg class="a" style="left:60px;top:731px" width="80" height="18"><path d="M28.5 1L35.5 15.5H56.5L63.5 1" fill="#ebeadb" stroke="#000" stroke-width="1"/><path d="M6.5 0L13.5 15.5H27.5L34.5 0Z" fill="#fdfdfb" stroke="none"/><path d="M6.5 0L13.5 15.5H27.5L34.5 0" fill="none" stroke="#000" stroke-width="1"/></svg>
<div class="a" style="left:74px;top:732px;font:bold 13.33px/15px 'Liberation Sans',sans-serif;color:#000">5</div>
<div class="a" style="left:95px;top:732px;font:13.33px/15px 'Liberation Sans',sans-serif;color:#000">5A</div>
<div class="a" style="left:609px;top:732px;width:397px;height:15px;background:#fbfbf8"></div>
<div class="a" style="left:608px;top:732px;width:1px;height:15px;background:#fff"></div><div class="a" style="left:609px;top:732px;width:1px;height:15px;background:#000"></div>
<div class="a" style="left:611px;top:732px;width:15px;height:14px;border-radius:2px;background:linear-gradient(#c5d5fb,#b7cbf6);border:1px solid #dbe6fb"></div>
<div class="a" style="left:616px;top:736px;width:6px;height:6px;border-left:2px solid #4d6185;border-bottom:2px solid #4d6185;transform:rotate(45deg)"></div>
<div class="a" style="left:627px;top:732px;width:281px;height:14px;border-radius:2px;background:linear-gradient(#cbdaf9,#b5c9f6);border:1px solid #e3ebfb"></div>
<div class="a" style="left:764px;top:735px;width:1px;height:7px;background:#eef3fd;box-shadow:1px 1px 0 #8ca2d6"></div>
<div class="a" style="left:766px;top:735px;width:1px;height:7px;background:#eef3fd;box-shadow:1px 1px 0 #8ca2d6"></div>
<div class="a" style="left:768px;top:735px;width:1px;height:7px;background:#eef3fd;box-shadow:1px 1px 0 #8ca2d6"></div>
<div class="a" style="left:770px;top:735px;width:1px;height:7px;background:#eef3fd;box-shadow:1px 1px 0 #8ca2d6"></div>
<div class="a" style="left:985px;top:732px;width:15px;height:14px;border-radius:2px;background:linear-gradient(#c5d5fb,#b7cbf6);border:1px solid #dbe6fb"></div>
<div class="a" style="left:988px;top:736px;width:6px;height:6px;border-right:2px solid #4d6185;border-top:2px solid #4d6185;transform:rotate(45deg)"></div>
<div class="a" style="left:1002px;top:732px;width:4px;height:15px;background:#ebeadb;border-right:2px solid #000"></div>
<div class="a" style="left:1006px;top:731px;width:19px;height:17px;background:#ebeadb"></div>
<div class="a" style="left:0;top:748px;width:1025px;height:20px;background:#ebeadb;border-top:1px solid #fbfbf8"></div>
<div class="a" style="left:4px;top:751px;font:11px/16px 'Liberation Sans',sans-serif;color:#000">Ready</div>
<div class="a" style="left:712px;top:751px;width:35px;height:16px;border:1px solid #cac8bb;border-right-color:#fff;border-bottom-color:#fff"></div>
<div class="a" style="left:749px;top:751px;width:111px;height:16px;border:1px solid #cac8bb;border-right-color:#fff;border-bottom-color:#fff"></div>
<div class="a" style="left:862px;top:751px;width:24px;height:16px;border:1px solid #cac8bb;border-right-color:#fff;border-bottom-color:#fff"></div>
<div class="a" style="left:888px;top:751px;width:28px;height:16px;border:1px solid #cac8bb;border-right-color:#fff;border-bottom-color:#fff"></div>
<div class="a" style="left:918px;top:751px;width:26px;height:16px;border:1px solid #cac8bb;border-right-color:#fff;border-bottom-color:#fff"></div>
<div class="a" style="left:946px;top:751px;width:28px;height:16px;border:1px solid #cac8bb;border-right-color:#fff;border-bottom-color:#fff"></div>
<div class="a" style="left:976px;top:751px;width:23px;height:16px;border:1px solid #cac8bb;border-right-color:#fff;border-bottom-color:#fff"></div>
<div class="a" style="left:1001px;top:751px;width:21px;height:16px;border:1px solid #cac8bb;border-right-color:#fff;border-bottom-color:#fff"></div>
</body></html>
